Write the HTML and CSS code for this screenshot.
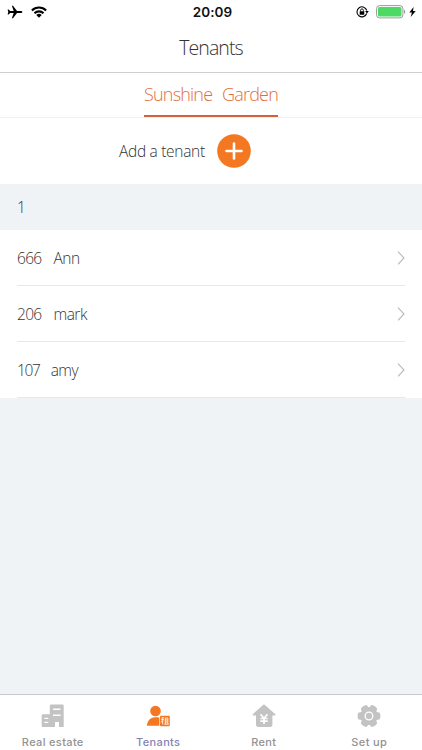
FILE: index.html
```
<!DOCTYPE html>
<html lang="en">
<head>
<meta charset="utf-8">
<title>Tenants</title>
<link rel="stylesheet" href="styles.css">
</head>
<body>
<div class="app">
  <header class="status">
    <div class="status-left">
      <svg width="16" height="14" viewBox="0 0 16 14"><path d="M15.400 7c0-.7-.8-1.100-1.700-1.100H10L6 .8H4.900l1.800 5.100H3.100L1.600 4.500H.6L1.300 7 .6 9.500h1l1.500-1.400h3.600l-1.800 5.100H6l4-5.100h3.700c.9 0 1.700-.4 1.700-1.100z"/></svg>
      <svg width="16" height="12" viewBox="0 0 16 12"><g fill="none" stroke="#000" stroke-width="2.100"><path d="M.9 4.500a10 10 0 0 1 14.200 0M3.500 7.300a6.300 6.300 0 0 1 9 0"/></g><path d="M5.300 9.100a3.900 3.900 0 0 1 5.400 0L8 11.800z"/></svg>
    </div>
    <div class="clock">20:09</div>
    <div class="status-right">
      <svg width="13" height="12" viewBox="0 0 13 12"><path d="M10.700 7.500A5 5 0 1 1 10.800 4.500" fill="none" stroke="#000" stroke-width="1.100"/><path d="M9.100 5h3.700L11 7.600zM3.700 5.300h4.600v3.400H3.700z"/><path d="M4.600 5.500V4.300a1.400 1.400 0 0 1 2.800 0v1.200" fill="none" stroke="#000" stroke-width=".9"/></svg>
      <svg class="battery" width="30" height="14" viewBox="0 0 30 14"><rect x=".6" y=".6" width="26.300" height="12.300" rx="3" fill="#fff" stroke="#999" stroke-width="1"/><rect x="2" y="2" width="23.500" height="9.500" rx="1.500" fill="#4cd964"/><path d="M28 4.500c1.700.8 1.700 3.700 0 4.500z" fill="#999"/></svg>
      <svg width="7" height="10" viewBox="0 0 7 10"><path d="M4.600 0L.3 5.500h2.600L1.700 10l5-6H4z"/></svg>
    </div>
  </header>
  <h1 class="title">Tenants</h1>
  <nav class="tabs"><span class="tab"><span>Sunshine</span> <span>Garden</span></span></nav>
  <section class="add">
    <span class="add-label">Add a tenant</span>
    <svg width="34" height="34" viewBox="0 0 34 34"><circle cx="17" cy="17" r="16.800" fill="#f47822"/><path d="M17 9.500v15M9.500 17h15" stroke="#fff" stroke-width="2.600" stroke-linecap="round"/></svg>
  </section>
  <div class="group">1</div>
  <ul class="list">
    <li class="row"><span class="room">666</span><span class="name">Ann</span><svg class="chevron" width="8" height="14" viewBox="0 0 8 14"><path d="M1 .7L7 7l-6 6.300"/></svg></li>
    <li class="row"><span class="room">206</span><span class="name">mark</span><svg class="chevron" width="8" height="14" viewBox="0 0 8 14"><path d="M1 .7L7 7l-6 6.300"/></svg></li>
    <li class="row"><span class="room narrow">107</span><span class="name">amy</span><svg class="chevron" width="8" height="14" viewBox="0 0 8 14"><path d="M1 .7L7 7l-6 6.300"/></svg></li>
  </ul>
  <main class="blank"></main>
  <footer class="bar">
    <div class="item">
      <svg width="24" height="24" viewBox="0 0 24 24"><path fill="#c3c3c3" fill-rule="evenodd" d="M10 .5h11.500q1.200 0 1.200 1.200V23H18v-5h-4v5H1.800Q.7 23 .7 21.800V11.500q0-1.200 1.100-1.200h7V1.700Q8.800.5 10 .5zM12 4.500v1.400h7.500V4.500zM12 10.500v1.400h7.500v-1.400zM3.300 13.700V15h4v-1.300zM3.300 17.700V19h4v-1.300z"/></svg>
      <span>Real estate</span>
    </div>
    <div class="item active">
      <svg width="24" height="24" viewBox="0 0 24 24"><g fill="#f47822"><circle cx="9.500" cy="7" r="5.300"/><path d="M1 21.700c0-4.700 3.400-8.500 7.800-8.500h2.300c1.300 0 2 .2 2.300.5v8z"/><rect x="14" y="11.700" width="9.800" height="10.500" rx="1"/></g><path d="M17.900 13.400l-2.500.7M15.100 15.700h3M16.700 14v6.500M16.600 16.500l-1.500 2M19.300 20v-6h2.500v6M19.300 16h2.500M19.300 18h2.500M18.300 20.200h4.500" fill="none" stroke="#fff" stroke-width=".85"/></svg>
      <span>Tenants</span>
    </div>
    <div class="item">
      <svg width="24" height="24" viewBox="0 0 24 24"><path fill="#c3c3c3" d="M12 .6q.5 0 .9.400l10.200 9c.8.7.4 1.500-.4 1.500h-2.300v9q0 2.500-2.500 2.500H6.500Q4 23 4 20.500v-9H1.400c-.8 0-1.200-.8-.4-1.500l10.100-9q.4-.4.900-.4z"/><path d="M8.500 10.300l3.500 4 3.500-4M12 14.300V20M8.300 14.500h7.400M8.300 17.200h7.400" fill="none" stroke="#fff" stroke-width="1.700"/></svg>
      <span>Rent</span>
    </div>
    <div class="item">
      <svg width="24" height="24" viewBox="0 0 24 24"><g fill="#c3c3c3"><circle cx="12" cy="12" r="9"/><g id="teeth"><rect x=".7" y="8.200" width="22.600" height="7.600" rx="2.400"/><rect x=".7" y="8.200" width="22.600" height="7.600" rx="2.400" transform="rotate(60 12 12)"/><rect x=".7" y="8.200" width="22.600" height="7.600" rx="2.400" transform="rotate(120 12 12)"/></g></g><circle cx="12" cy="12" r="3.800" fill="none" stroke="#fff" stroke-width="1.300"/></svg>
      <span>Set up</span>
    </div>
  </footer>
</div>
</body>
</html>
```
FILE: styles.css
```
* { box-sizing: border-box; }
body { margin: 0; background: #fff; }
svg { display: block; flex: none; }
.app {
  width: 422px;
  height: 750px;
  display: flex;
  flex-direction: column;
  font-family: "Open Sans", "Noto Sans", sans-serif;
  font-weight: 300;
  color: #333;
}
.status {
  height: 24px;
  display: grid;
  grid-template-columns: 1fr auto 1fr;
  align-items: center;
  padding: 0 6px 0 7px;
}
.status-left { display: flex; align-items: center; gap: 8px; }
.clock {
  font: 600 13.5px/24px Inter, sans-serif;
  letter-spacing: .1px;
  color: #111;
  padding-left: 2px;
}
.status-right { display: flex; align-items: center; justify-content: flex-end; }
.battery { margin: 0 3px 0 7px; }
.title {
  margin: 0;
  height: 49px;
  border-bottom: 1px solid #cfcfcf;
  font-size: 19.5px;
  letter-spacing: -.9px;
  line-height: 47px;
  font-weight: 300;
  text-align: center;
}
.tabs {
  height: 45px;
  display: flex;
  justify-content: center;
  align-items: flex-start;
  border-bottom: 1px solid #f1f1f1;
}
.tab {
  height: 44px;
  width: 134px;
  display: flex;
  justify-content: space-between;
  border-bottom: 2px solid #d2623a;
  color: #df6f3d;
  font-size: 18px;
  letter-spacing: -.8px;
  line-height: 42px;
  white-space: nowrap;
}
.add {
  height: 66px;
  display: flex;
  align-items: center;
  gap: 11.5px;
  padding-left: 119px;
}
.add-label { font-size: 15.5px; width: 86px; letter-spacing: -.3px; white-space: nowrap; }
.group {
  height: 46px;
  padding-left: 17px;
  background: #eff3f6;
  font-size: 15.5px;
  line-height: 47px;
}
.list { margin: 0; padding: 0 17px; list-style: none; }
.row {
  height: 56px;
  display: flex;
  align-items: center;
  border-bottom: 1px solid #e8e8e8;
  font-size: 15.5px;
}
.room { margin-right: 12px; letter-spacing: -.7px; }
.narrow { letter-spacing: -1.3px; margin-right: 11px; }
.name { letter-spacing: -.5px; }
.chevron { margin-left: auto; fill: none; stroke: #b9b9b9; stroke-width: 1.1; }
.blank { flex: 1; background: #eff3f6; }
.bar {
  height: 56px;
  display: flex;
  border-top: 1px solid #c7c9ce;
}
.item {
  flex: 1;
  display: flex;
  flex-direction: column;
  align-items: center;
  padding-top: 9px;
  font: 500 11px/16px Inter, sans-serif;
  letter-spacing: .35px;
  color: #929292;
}
.item span { margin-top: 6px; }
.active { color: #8384b4; }
```
